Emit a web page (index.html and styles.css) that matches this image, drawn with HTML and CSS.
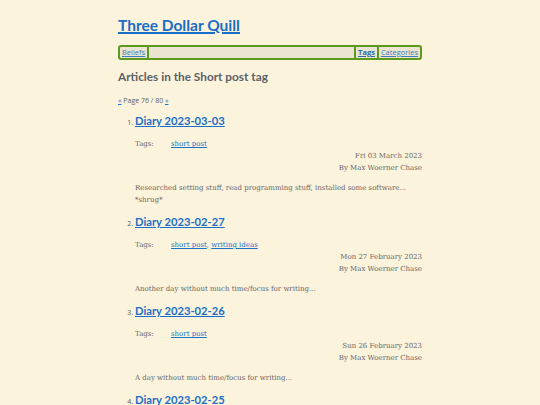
FILE: index.html
```html
<!DOCTYPE html>
<html>
<head>
<meta charset="utf-8">
<link rel="stylesheet" href="styles.css">
</head>
<body>
<div class="page">
  <h1 class="site-title"><a href="#">Three Dollar Quill</a></h1>
  <nav class="nav">
    <a class="nav-item nav-left" href="#">Beliefs</a>
    <span class="nav-fill"></span>
    <a class="nav-item nav-right current" href="#">Tags</a>
    <a class="nav-item nav-right" href="#">Categories</a>
  </nav>
  <h2 class="page-heading">Articles in the Short post tag</h2>
  <p class="pager"><a href="#">«</a> Page 76 / 80 <a href="#">»</a></p>
  <ol class="articles" start="1">
    <li class="article">
      <h3 class="article-title"><a href="#">Diary 2023-03-03</a></h3>
      <div class="tags"><span class="tags-label">Tags:</span><span><a href="#">short post</a></span></div>
      <div class="meta">Fri 03 March 2023<br>By Max Woerner Chase</div>
      <p class="summary">Researched setting stuff, read programming stuff, installed some software... *shrug*</p>
    </li>
    <li class="article">
      <h3 class="article-title"><a href="#">Diary 2023-02-27</a></h3>
      <div class="tags"><span class="tags-label">Tags:</span><span><a href="#">short post</a>, <a href="#">writing ideas</a></span></div>
      <div class="meta">Mon 27 February 2023<br>By Max Woerner Chase</div>
      <p class="summary">Another day without much time/focus for writing...</p>
    </li>
    <li class="article">
      <h3 class="article-title"><a href="#">Diary 2023-02-26</a></h3>
      <div class="tags"><span class="tags-label">Tags:</span><span><a href="#">short post</a></span></div>
      <div class="meta">Sun 26 February 2023<br>By Max Woerner Chase</div>
      <p class="summary">A day without much time/focus for writing...</p>
    </li>
    <li class="article">
      <h3 class="article-title"><a href="#">Diary 2023-02-25</a></h3>
      <div class="tags"><span class="tags-label">Tags:</span><span><a href="#">short post</a></span></div>
      <div class="meta">Sat 25 February 2023<br>By Max Woerner Chase</div>
      <p class="summary">Another day without much time/focus for writing...</p>
    </li>
  </ol>
</div>
</body>
</html>
```
FILE: styles.css
```css
html, body {
  margin: 0;
  padding: 0;
  background: #fcf3dc;
}
body {
  font-family: "DejaVu Serif", serif;
  color: #5b5b5b;
}
a {
  color: #1a72c9;
}
.page {
  width: 304px;
  margin: 0 auto;
  padding-top: 14px;
}
.site-title {
  font-family: Lato, sans-serif;
  font-size: 15.5px;
  font-weight: 700;
  line-height: 22px;
  margin: 0;
}
.site-title a {
  color: #1a6ec6;
  text-decoration-thickness: 1.5px;
}
.nav {
  display: flex;
  align-items: stretch;
  margin-top: 9px;
  border: 2px solid #5c9a1e;
  border-radius: 3px;
  background: #ebe4d1;
  height: 11px;
  font-family: "Open Sans", sans-serif;
  font-size: 7.5px;
  line-height: 11px;
}
.nav-item {
  padding: 0 2px;
  color: #3d7dbd;
}
.nav-left {
  border-right: 2px solid #5c9a1e;
}
.nav-fill {
  flex: 1;
}
.nav-right {
  border-left: 2px solid #5c9a1e;
}
.nav-item.current {
  font-weight: 700;
  color: #2b6aa8;
}
.page-heading {
  font-family: Lato, sans-serif;
  font-size: 11.8px;
  font-weight: 700;
  color: #5a6168;
  margin: 8px 0 0;
  line-height: 18px;
}
.pager {
  font-family: "Open Sans", sans-serif;
  font-size: 7px;
  margin: 10px 0 0;
  line-height: 10px;
  color: #5a6168;
}
.articles {
  margin: 6px 0 0;
  padding-left: 17px;
  font-family: "Open Sans", sans-serif;
  font-size: 7px;
}
.article {
  margin-bottom: 7px;
}
.article-title {
  font-family: Lato, sans-serif;
  font-size: 11.2px;
  font-weight: 700;
  margin: 0;
  line-height: 18px;
}
.article-title a {
  color: #1a6ec6;
}
.tags {
  display: flex;
  font-family: "DejaVu Serif", serif;
  font-size: 7px;
  line-height: 12px;
  margin-top: 8px;
  color: #666;
}
.tags-label {
  width: 36px;
}
.meta {
  text-align: right;
  font-family: "DejaVu Serif", serif;
  font-size: 7px;
  line-height: 12px;
  color: #666;
}
.summary {
  font-family: "DejaVu Serif", serif;
  font-size: 7px;
  line-height: 12px;
  margin: 8px 0 0;
  color: #666;
  padding-right: 8px;
}
```
